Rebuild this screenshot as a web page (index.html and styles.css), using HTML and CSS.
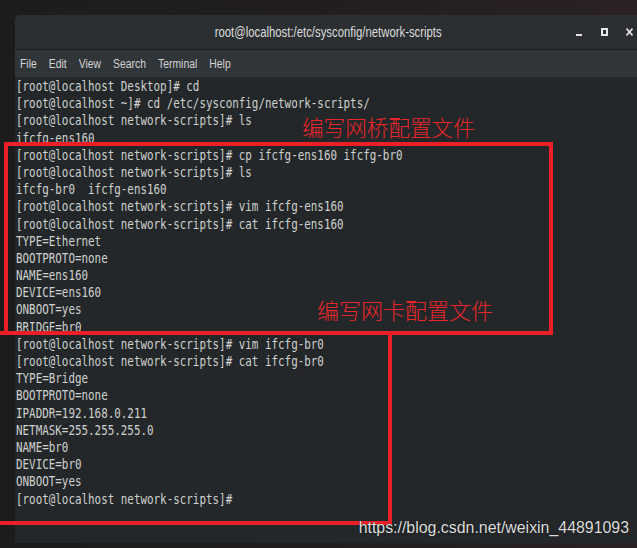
FILE: index.html
```html
<!DOCTYPE html>
<html lang="en">
<head>
  <meta charset="UTF-8" />
  <title>root@localhost:/etc/sysconfig/network-scripts</title>
  <link rel="stylesheet" href="styles.css">
</head>
<body>

<div class="screen">
  <div class="window">
    <div class="titlebar">
      <div></div>
      <div class="title">root@localhost:/etc/sysconfig/network-scripts</div>
      <div class="controls">
        <svg width="7" height="8" viewBox="0 0 7 8"><rect x="0" y="6" width="6" height="2" fill="#e6e6e6"/></svg>
        <svg width="7" height="8" viewBox="0 0 7 8"><rect x="1" y="1" width="5" height="6" fill="none" stroke="#e6e6e6" stroke-width="2"/></svg>
        <svg width="7" height="8" viewBox="0 0 7 8"><path d="M0.5 0.5 L6.5 7.5 M6.5 0.5 L0.5 7.5" stroke="#e6e6e6" stroke-width="1.6"/></svg>
      </div>
    </div>

    <div class="menubar">
      <div class="menu">
        <span>File</span>
        <span>Edit</span>
        <span>View</span>
        <span>Search</span>
        <span>Terminal</span>
        <span>Help</span>
      </div>
    </div>

    <div class="terminal">
<pre class="output">[root@localhost Desktop]# cd
[root@localhost ~]# cd /etc/sysconfig/network-scripts/
[root@localhost network-scripts]# ls
ifcfg-ens160
[root@localhost network-scripts]# cp ifcfg-ens160 ifcfg-br0
[root@localhost network-scripts]# ls
ifcfg-br0  ifcfg-ens160
[root@localhost network-scripts]# vim ifcfg-ens160
[root@localhost network-scripts]# cat ifcfg-ens160
TYPE=Ethernet
BOOTPROTO=none
NAME=ens160
DEVICE=ens160
ONBOOT=yes
BRIDGE=br0
[root@localhost network-scripts]# vim ifcfg-br0
[root@localhost network-scripts]# cat ifcfg-br0
TYPE=Bridge
BOOTPROTO=none
IPADDR=192.168.0.211
NETMASK=255.255.255.0
NAME=br0
DEVICE=br0
ONBOOT=yes
[root@localhost network-scripts]#</pre>
    </div>
  </div>

  <!-- annotations drawn over the screenshot -->
  <div class="mark mark-bridge"></div>
  <div class="mark mark-nic"></div>
  <div class="note note-bridge">编写网桥配置文件</div>
  <div class="note note-nic">编写网卡配置文件</div>
  <div class="watermark">https://blog.csdn.net/weixin_44891093</div>
</div>

</body>
</html>
```

FILE: styles.css
```css
html, body {
  margin: 0;
  overflow: hidden;
}

body {
  background: #1e1c1d;
}

.screen {
  position: relative;
  width: 637px;
  height: 548px;
  overflow: hidden;
  padding-top: 15px;
  box-sizing: border-box;
  background: linear-gradient(to right, #1d1c1d 0%, #221e20 50%, #2b2123 100%);
}

.window {
  margin-left: 15px;
  width: 626px;
  height: 528px;
  display: flex;
  flex-direction: column;
  border-radius: 5px 5px 0 0;
  overflow: hidden;
  background: #232729;
}

.titlebar {
  height: 34px;
  display: grid;
  grid-template-columns: 1fr auto 1fr;
  align-items: center;
  background: #2b2f32;
  border-bottom: 1px solid #1c1f21;
}

.title {
  font-family: "Liberation Sans", Arial, sans-serif;
  font-size: 14px;
  color: #dcdcdc;
  transform: scaleX(0.81);
  transform-origin: center;
}

.controls {
  display: flex;
  justify-content: flex-end;
  align-items: center;
  gap: 18px;
  padding-right: 8px;
}

.controls svg {
  display: block;
}

.menubar {
  height: 27px;
  display: flex;
  align-items: center;
  background: #30353a;
  padding-left: 5px;
}

.menu {
  display: flex;
  gap: 15px;
  font-family: "Liberation Sans", Arial, sans-serif;
  font-size: 13px;
  color: #d4d4d4;
  transform: scaleX(0.8);
  transform-origin: left center;
}

.terminal {
  flex: 1;
  background: #232729;
  padding: 1px 0 0 1px;
}

.output {
  margin: 0;
  font-family: "DejaVu Sans Mono", monospace;
  font-size: 13.5px;
  line-height: 17.18px;
  color: #cfd1cf;
  transform: scaleX(0.806);
  transform-origin: left top;
}

.mark {
  position: absolute;
  border: 4px solid #ea1f27;
  box-sizing: border-box;
}

.mark-bridge {
  left: 4px;
  top: 142px;
  width: 549px;
  height: 193px;
}

.mark-nic {
  left: -10px;
  top: 331px;
  width: 402px;
  height: 194px;
}

.note {
  position: absolute;
  font-family: "Noto Sans CJK SC", sans-serif;
  font-weight: 300;
  color: #e8262c;
  line-height: 1;
}

.note-bridge {
  left: 302px;
  top: 116px;
  font-size: 21.6px;
}

.note-nic {
  left: 317px;
  top: 298px;
  font-size: 22px;
}

.watermark {
  position: absolute;
  right: 8px;
  top: 519px;
  font-family: "Liberation Sans", Arial, sans-serif;
  font-size: 15.9px;
  line-height: 18px;
  color: #dedede;
  text-shadow: 0 0 1px #000;
}
```
